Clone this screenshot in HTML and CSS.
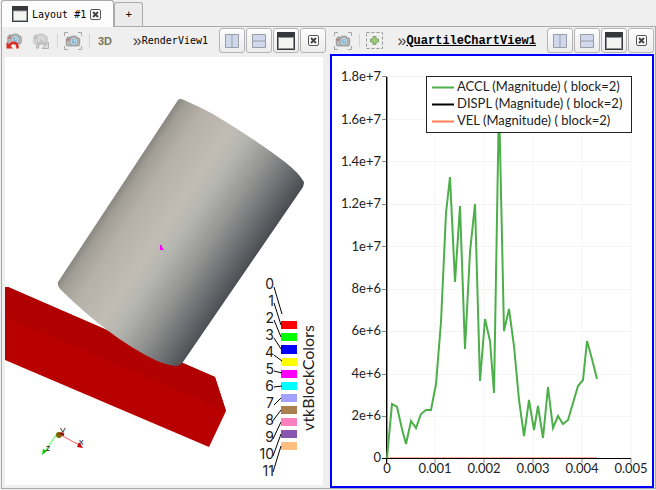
FILE: index.html
```
<!DOCTYPE html>
<html lang="en">
<head>
    <meta charset="UTF-8">
    <meta name="viewport" content="width=device-width, initial-scale=1.0">
    <title>Layout #1</title>
    <link rel="stylesheet" href="styles.css">
</head>
<body>
    <!-- shared icons -->
    <svg class="defs" width="0" height="0">
        <symbol id="camera" viewBox="0 0 18 18">
            <path d="M3 6V4.500h3V6" fill="#c8cacb" stroke="#8d8f91"/>
            <rect x="1.500" y="5.500" width="15" height="9" rx="1.500" fill="#b9bcbe" stroke="#8d8f91"/>
            <path d="M6.500 5.500l1-2h5l1 2" fill="#d0d2d3" stroke="#8d8f91"/>
            <rect x="2" y="7" width="3" height="1.500" fill="#c9574b"/>
            <circle cx="10" cy="9.500" r="4.500" fill="#dfe3e6" stroke="#8d8f91"/>
            <circle cx="10" cy="9.500" r="2.800" fill="#7db4dc"/>
            <circle cx="10.500" cy="9" r="1.200" fill="#b8dcf2"/>
        </symbol>
        <symbol id="capture" viewBox="0 0 18 18">
            <use href="#camera" width="16" height="16" x="1" y="1"/>
            <path d="M.5 4V.5H4M14 .5h3.500V4M17.500 14v3.500H14M4 17.500H.5V14" fill="none" stroke="#a5a5a5"/>
        </symbol>
        <symbol id="split-h" viewBox="0 0 14 14">
            <path d="M.5.500h13v13H.5zM7 .5v13" fill="#d0d8ee" stroke="#9a9da3"/>
        </symbol>
        <symbol id="split-v" viewBox="0 0 14 14">
            <path d="M.5.500h13v13H.5zM.5 7h13" fill="#d0d8ee" stroke="#9a9da3"/>
        </symbol>
        <symbol id="window" viewBox="0 0 18 18">
            <path d="M0 0h18v18H0z" fill="#36393b"/>
            <path d="M1 5h16v12H1z" fill="#8d8f90"/>
            <path d="M2 6h14v10H2z" fill="#f4f4f2"/>
        </symbol>
        <symbol id="close" viewBox="0 0 11 11">
            <rect x=".5" y=".5" width="10" height="10" rx="1.500" fill="#fff" stroke="#555"/>
            <path d="M3 3l5 5M8 3l-5 5" stroke="#444" stroke-width="2"/>
        </symbol>
    </svg>

    <nav class="tabs">
        <div class="tab active">
            <svg width="16" height="16"><use href="#window"/></svg>
            <span>Layout #1</span>
            <button class="icon-btn" aria-label="Close layout"><svg width="11" height="11"><use href="#close"/></svg></button>
        </div>
        <button class="tab add">+</button>
    </nav>

    <main class="frame">
        <section class="view">
            <header class="toolbar">
                <button class="icon-btn first" aria-label="Camera undo">
                    <svg width="18" height="18" viewBox="0 0 18 18">
                        <use href="#camera" width="17" height="16" y="-1"/>
                        <path d="M3.500 14C4.500 9.500 12 9 11.500 16.500" fill="none" stroke="#dc2a22" stroke-width="2.500"/>
                        <path d="M.5 10v6.500H7z" fill="#dc2a22"/>
                    </svg>
                </button>
                <button class="icon-btn redo" aria-label="Camera redo">
                    <svg width="18" height="18" viewBox="0 0 18 18">
                        <use href="#camera" width="17" height="16" y="-1" class="gray"/>
                        <path d="M13.500 14C12.500 9.500 5 9 5.500 16.500" fill="none" stroke="#b4b4b4" stroke-width="3"/>
                        <path d="M16.500 10v6.500H10z" fill="#dadada" stroke="#b4b4b4"/>
                        <path d="M13.500 14C12.500 9.500 5 9 5.500 16" fill="none" stroke="#dadada"/>
                    </svg>
                </button>
                <span class="sep"></span>
                <button class="icon-btn" aria-label="Capture"><svg width="18" height="18"><use href="#capture"/></svg></button>
                <span class="sep"></span>
                <button class="icon-btn mode">3D</button>
                <div class="title"><span class="more">»</span><span>RenderView1</span></div>
                <div class="buttons">
                    <button aria-label="Split horizontal"><svg width="14" height="14"><use href="#split-h"/></svg></button>
                    <button aria-label="Split vertical"><svg width="14" height="14"><use href="#split-v"/></svg></button>
                    <button aria-label="Maximize"><svg width="18" height="18"><use href="#window"/></svg></button>
                    <button aria-label="Close"><svg width="11" height="11"><use href="#close"/></svg></button>
                </div>
            </header>
            <div class="pane">
                <svg class="scene" viewBox="5 57 318 428">
                    <defs>
                        <linearGradient id="metal" gradientUnits="userSpaceOnUse" x1="117" y1="190" x2="244" y2="274">
                            <stop offset="0" stop-color="#85837c"/>
                            <stop offset=".06" stop-color="#a19e96"/>
                            <stop offset=".18" stop-color="#b5b1a9"/>
                            <stop offset=".4" stop-color="#c1bdb4"/>
                            <stop offset=".52" stop-color="#b5b5b0"/>
                            <stop offset=".7" stop-color="#949493"/>
                            <stop offset=".86" stop-color="#6e6f72"/>
                            <stop offset="1" stop-color="#4b4d52"/>
                        </linearGradient>
                    </defs>
                    <!-- plate -->
                    <path d="M5 287h3l207 90 11 34-17 36L5 360z" fill="#b80000"/>
                    <path d="M5 287h3l207 90 11 34L5 317z" fill="#b00000"/>
                    <!-- can -->
                    <path d="M178 100Q180 98 184 100Q200 107 213 114Q235 127 257 142Q272 152 285 162Q299 173 304 182Q304 184 303 187L183 362Q180 366 175 366Q167 365 157 361Q132 349 107 330Q90 317 77 305Q66 295 60 289Q57 285 58 282z" fill="url(#metal)"/>
                    <path d="M160 245h2v2l2 3h-4z" fill="#f0f"/>

                    <!-- block colors -->
                    <path d="M281 321h16v8h-16z" fill="#f00"/>
                    <path d="M281 333h16v8h-16z" fill="#0f0"/>
                    <path d="M281 345h16v9h-16z" fill="#00f"/>
                    <path d="M281 358h16v8h-16z" fill="#ff0"/>
                    <path d="M281 370h16v8h-16z" fill="#f0f"/>
                    <path d="M281 382h16v8h-16z" fill="#0ff"/>
                    <path d="M281 394h16v8h-16z" fill="#a1a1ff"/>
                    <path d="M281 406h16v8h-16z" fill="#ab8050"/>
                    <path d="M281 418h16v8h-16z" fill="#ff80bf"/>
                    <path d="M281 430h16v8h-16z" fill="#8757b0"/>
                    <path d="M281 442h16v8h-16z" fill="#ffbf80"/>
                    <path class="leader" d="M274 287l8 27M274 303l7 22M274 320l7 17M274 338l7 11M274 355l8 6M274 371l8 2M274 387l8-1M274 405l7-7M272 422l9-12M273 439l8-17M273 456l8-22M273 472l8-26"/>
                    <g class="blocks">
                        <text x="274" y="289">0</text>
                        <text x="274" y="306">1</text>
                        <text x="274" y="323">2</text>
                        <text x="274" y="340">3</text>
                        <text x="274" y="357">4</text>
                        <text x="274" y="374">5</text>
                        <text x="274" y="391">6</text>
                        <text x="274" y="408">7</text>
                        <text x="274" y="425">8</text>
                        <text x="274" y="442">9</text>
                        <text x="274" y="459">10</text>
                        <text x="274" y="476">11</text>
                    </g>
                    <text class="bar-title" transform="translate(314 378) rotate(-90)">vtkBlockColors</text>

                    <!-- orientation axes -->
                    <path d="M59 434l22 12" stroke="#ff5a5a"/>
                    <path d="M58 432L44 453" stroke="#3f3"/>
                    <path d="M79 442l4 6-6-1z" fill="#c00"/>
                    <path d="M43 449l4 2-5 4z" fill="#0c0"/>
                    <circle cx="59" cy="435" r="3" fill="#7a6a00"/>
                    <path d="M60 433l4 2" stroke="#a00" stroke-width="2"/>
                    <g class="axes">
                        <text x="60" y="435">Y</text>
                        <text x="79" y="445">x</text>
                        <text x="46" y="451">z</text>
                    </g>
                </svg>
            </div>
        </section>

        <section class="view">
            <header class="toolbar">
                <button class="icon-btn" aria-label="Capture"><svg width="18" height="18"><use href="#capture"/></svg></button>
                <span class="sep"></span>
                <button class="icon-btn" aria-label="Add selection">
                    <svg width="17" height="17" viewBox="0 0 17 17">
                        <rect x=".5" y=".5" width="16" height="16" fill="none" stroke="#999" stroke-dasharray="3 2"/>
                        <path d="M7 4.500h3V7h2.500v3H10v2.500H7V10H4.500V7H7z" fill="#9ccb7c" stroke="#7fa567"/>
                    </svg>
                </button>
                <div class="title current"><span class="more">»</span><span class="name">QuartileChartView1</span></div>
                <div class="buttons">
                    <button aria-label="Split horizontal"><svg width="14" height="14"><use href="#split-h"/></svg></button>
                    <button aria-label="Split vertical"><svg width="14" height="14"><use href="#split-v"/></svg></button>
                    <button aria-label="Maximize"><svg width="18" height="18"><use href="#window"/></svg></button>
                    <button aria-label="Close"><svg width="11" height="11"><use href="#close"/></svg></button>
                </div>
            </header>
            <div class="pane selected">
                <svg class="scene" viewBox="332 56 320 430">
                    <path class="grid" d="M387 76.500h244M387 119.500h244M387 161.500h244M387 204.500h244M387 246.500h244M387 289.500h244M387 331.500h244M387 374.500h244M387 416.500h244M435 77v381M484 77v381M533 77v381M582 77v381M631 77v381"/>
                    <path class="ticks" d="M382 76.500h5M382 119.500h5M382 161.500h5M382 204.500h5M382 246.500h5M382 289.500h5M382 331.500h5M382 374.500h5M382 416.500h5M387 458v5M435 458v5M484 458v5M533 458v5M582 458v5M631 458v5"/>
                    <path d="M387 457.500h210" stroke="#ffb49c"/>
                    <path d="M386.500 77v386M382 458.500h249" stroke="#000" fill="none"/>
                    <path d="M387.500 77v381" stroke="#79a66d"/>
                    <polyline class="accl" points="387,458 392,404 397,407 402,429 406,444 411,421 416,428 421,414 426,410 431,410 436,384 441,322 446,213 450,177 455,282 460,206 465,349 470,252 475,204 480,381 485,319 490,341 494,393 499,100 504,331 509,309 514,346 519,400 524,436 529,400 534,430 538,406 543,438 548,387 553,428 558,416 563,424 568,420 573,403 578,386 583,380 587,341 592,359 597,379"/>
                    <g class="y-labels">
                        <text x="381" y="81">1.8e+7</text>
                        <text x="381" y="124">1.6e+7</text>
                        <text x="381" y="166">1.4e+7</text>
                        <text x="381" y="208">1.2e+7</text>
                        <text x="381" y="251">1e+7</text>
                        <text x="381" y="293">8e+6</text>
                        <text x="381" y="335">6e+6</text>
                        <text x="381" y="378">4e+6</text>
                        <text x="381" y="420">2e+6</text>
                        <text x="381" y="462">0</text>
                    </g>
                    <g class="x-labels">
                        <text x="387" y="473">0</text>
                        <text x="435" y="473">0.001</text>
                        <text x="484" y="473">0.002</text>
                        <text x="533" y="473">0.003</text>
                        <text x="582" y="473">0.004</text>
                        <text x="631" y="473">0.005</text>
                    </g>
                    <rect x="426.500" y="76.500" width="205" height="56" fill="#fff" stroke="#222"/>
                    <path d="M432 87.500h22" stroke="#4daf4a" stroke-width="2"/>
                    <path d="M432 104.500h22" stroke="#000" stroke-width="2"/>
                    <path d="M432 121.500h22" stroke="#ff7f50" stroke-width="2"/>
                    <g class="legend">
                        <text x="457" y="91">ACCL (Magnitude) ( block=2)</text>
                        <text x="457" y="108">DISPL (Magnitude) ( block=2)</text>
                        <text x="457" y="125">VEL (Magnitude) ( block=2)</text>
                    </g>
                </svg>
            </div>
        </section>
    </main>
</body>
</html>
```
FILE: styles.css
```
* {
    box-sizing: border-box;
}
body {
    margin: 0;
    height: 100vh;
    display: flex;
    flex-direction: column;
    background-color: #efefef;
    font-family: "DejaVu Sans Mono", monospace;
    font-size: 10px;
    color: #000;
}
svg {
    display: block;
}
.defs {
    position: absolute;
}
button {
    font: inherit;
    color: inherit;
    padding: 0;
}
.icon-btn {
    border: none;
    background: none;
}

/* tabs */
.tabs {
    display: flex;
    align-items: flex-end;
    height: 26px;
    padding-left: 1px;
}
.tab {
    display: flex;
    align-items: center;
    justify-content: center;
    border: 1px solid #aaa;
    border-bottom: none;
    border-radius: 3px 3px 0 0;
}
.tab.active {
    height: 27px;
    margin-bottom: -1px;
    padding: 0 12px 0 10px;
    gap: 4px;
    background-color: #fcfcfc;
    z-index: 1;
}
.tab.add {
    width: 29px;
    height: 24px;
    background-color: #ebebeb;
}

/* views */
.frame {
    flex: 1;
    min-height: 0;
    display: grid;
    grid-template-columns: 1fr 1fr;
    gap: 4px;
    margin: 0 0 1px 1px;
    padding-right: 1px;
    border: 1px solid #aaa;
}
.view {
    display: flex;
    flex-direction: column;
    min-width: 0;
    min-height: 0;
}
.toolbar {
    display: flex;
    align-items: center;
    height: 27px;
    padding-left: 4px;
}
.redo {
    margin-left: 8px;
}
.sep {
    width: 1px;
    height: 13px;
    margin: 0 6px 0 7px;
    background-color: #d2d2d2;
}
.mode {
    margin-left: 2px;
    font: bold 11px "Liberation Sans", sans-serif;
    color: #77775c;
}
.title {
    flex: 1;
    display: flex;
    align-items: center;
    justify-content: flex-end;
    margin-right: 11px;
}
.title.current {
    font-family: "Liberation Mono", monospace;
    font-size: 12px;
    font-weight: bold;
}
.name {
    text-decoration: underline;
}
.more {
    font: 16px "Liberation Sans", sans-serif;
    line-height: 16px;
    color: #444;
}
.buttons {
    display: flex;
    gap: 1px;
}
.buttons button {
    display: flex;
    align-items: center;
    justify-content: center;
    width: 26px;
    height: 25px;
    border: 1px solid #b4b4b4;
    border-radius: 3px;
    background: linear-gradient(#fdfdfd, #ececec);
}
.pane {
    flex: 1;
    min-height: 0;
    border: 3px solid #efefef;
    background-color: #fff;
}
.pane.selected {
    border: 2px solid #00f;
}
.scene {
    width: 100%;
    height: 100%;
}
.gray {
    filter: grayscale(1);
    opacity: 0.5;
}

/* drawings */
.scene text {
    font-family: Lato, sans-serif;
    fill: #222;
}
.leader {
    fill: none;
    stroke: #000;
}
.blocks text {
    font-family: Inter, sans-serif;
    font-size: 14px;
    text-anchor: end;
}
.scene .bar-title {
    font-size: 16px;
    text-anchor: middle;
}
.axes text {
    font-size: 9px;
}
.grid {
    fill: none;
    stroke: #f4f4f4;
}
.ticks {
    fill: none;
    stroke: #888;
}
.accl {
    fill: none;
    stroke: #4daf4a;
    stroke-width: 2;
}
.y-labels text {
    font-size: 13px;
    text-anchor: end;
}
.x-labels text {
    font-size: 13px;
    text-anchor: middle;
}
.legend text {
    font-size: 13px;
}
```
